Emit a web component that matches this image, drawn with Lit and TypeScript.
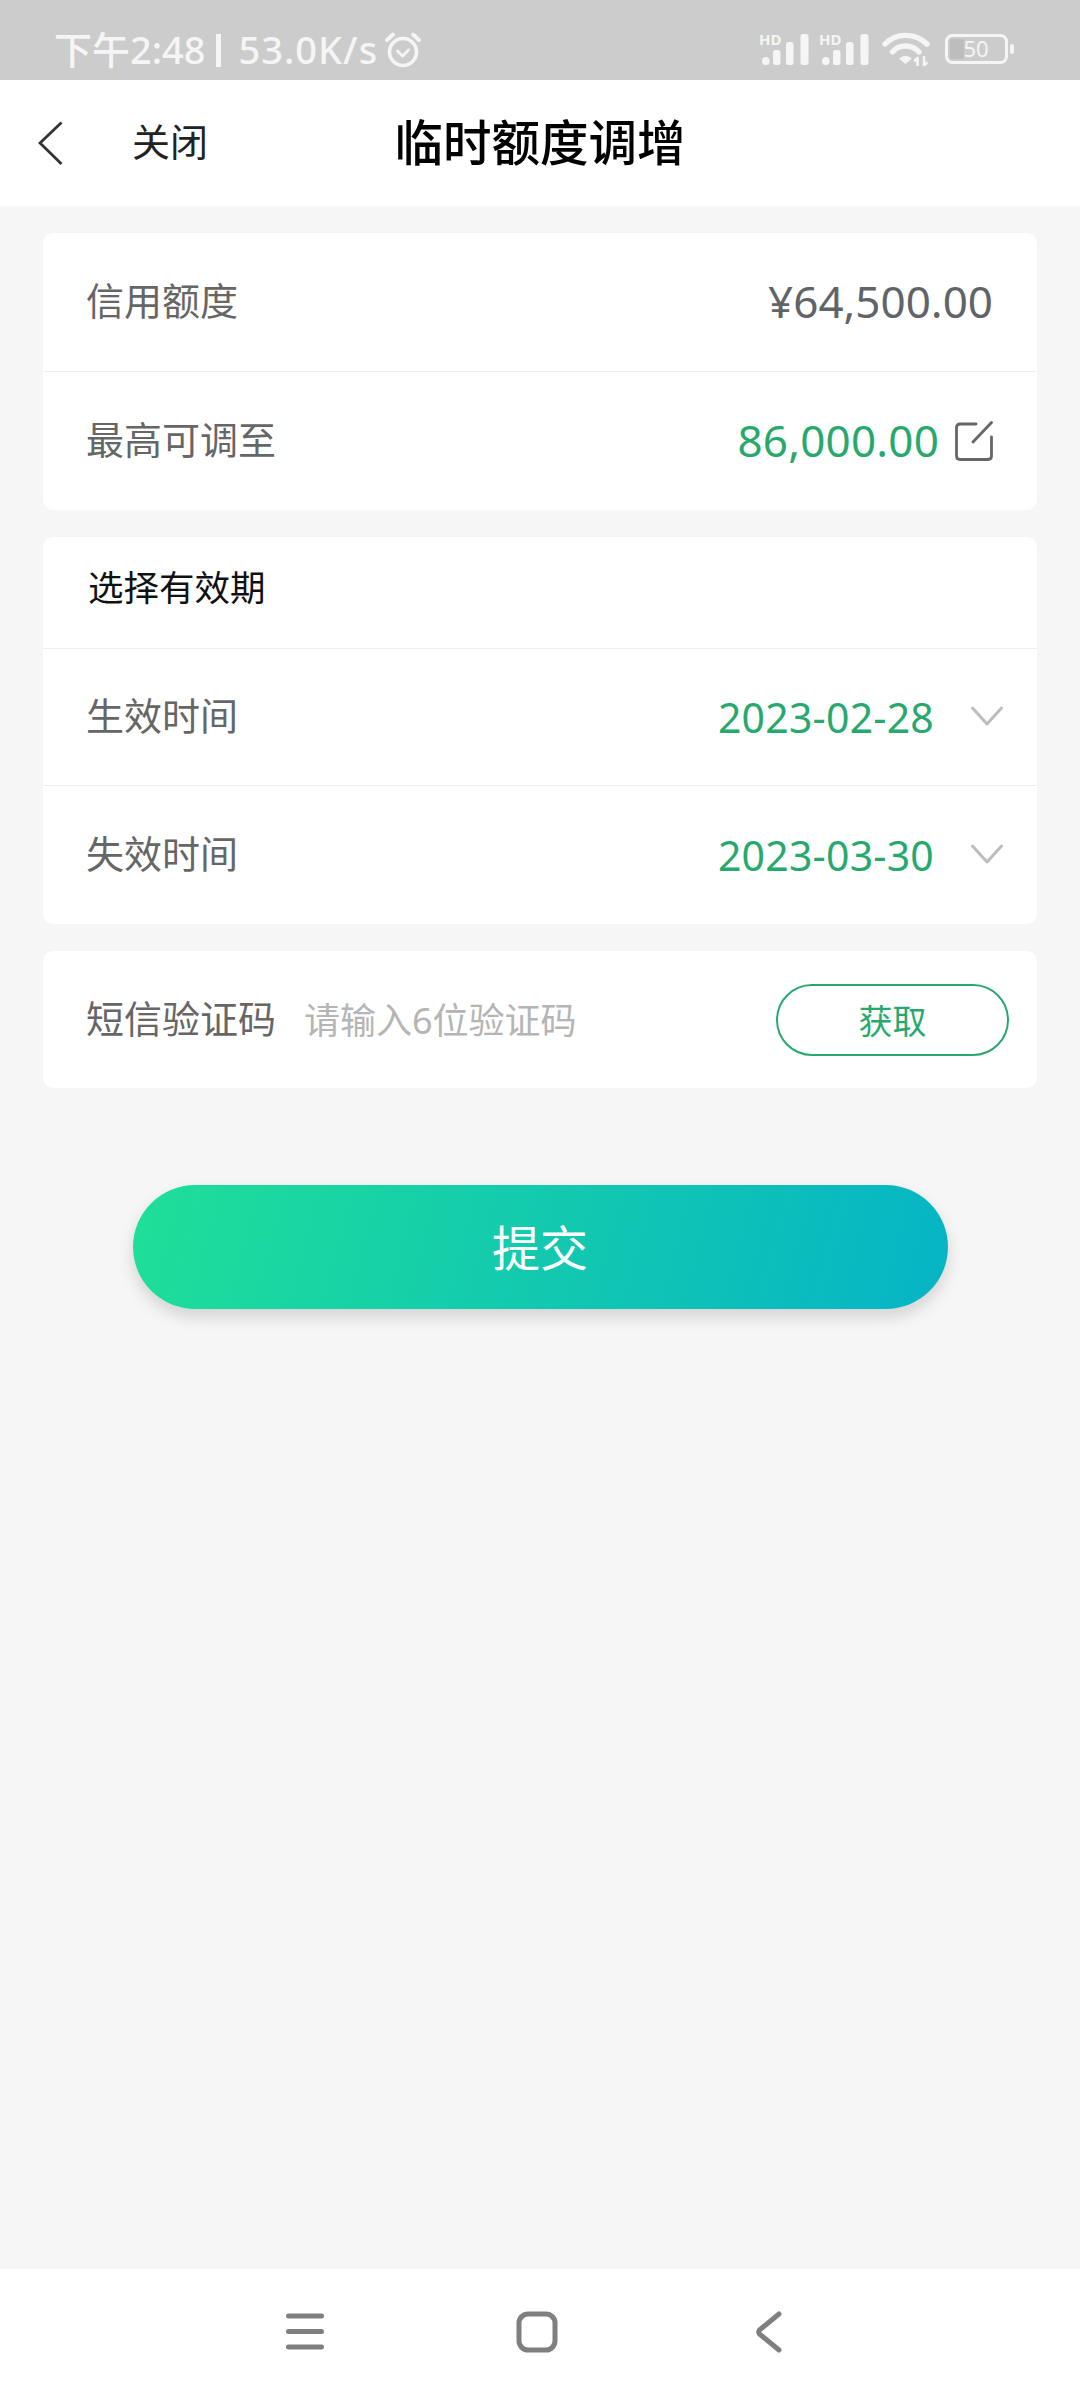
import { css, html, LitElement, svg } from "lit";
import { customElement } from "lit/decorators.js";

const signalIcon = html`
  <svg width="50" height="38" viewBox="0 0 50 38">
    <text x="0" y="17" class="hd">HD</text>
    <rect x="3" y="29" width="7.5" height="8" rx="3.5" fill="#f5f5f5" />
    <rect x="14" y="22" width="7.5" height="15" rx="2.5" fill="#f5f5f5" />
    <rect x="27" y="14" width="7.5" height="23" rx="2.5" fill="#f5f5f5" />
    <rect x="41.5" y="6" width="8" height="31" rx="2.5" fill="#f5f5f5" />
  </svg>
`;

const chevron = svg`<path d="M1.5 2 L16 18 L30.5 2" fill="none" stroke="#bdbdbd" stroke-width="3" stroke-linecap="round" stroke-linejoin="round" />`;

@customElement("app-root")
export class AppRoot extends LitElement {
  render() {
    return html`
      <div class="page">
        <div class="status-bar">
          <div class="status-left">
            <span>下午2:48</span>
            <i class="pipe"></i>
            <span class="speed">53.0K/s</span>
            <svg width="38" height="38" viewBox="0 0 38 38" fill="none" stroke="#f5f5f5" stroke-linecap="round" stroke-linejoin="round">
              <circle cx="19" cy="21" r="13.5" stroke-width="3.6" />
              <path d="M13.5 20 L18.5 25 L24.5 19" stroke-width="3" />
              <path d="M3 9 L9 3.5 M35 9 L29 3.5" stroke-width="4" />
            </svg>
          </div>
          <div class="status-right">
            ${signalIcon} ${signalIcon}
            <svg class="wifi" width="48" height="34" viewBox="0 0 48 34" fill="none" stroke="#f5f5f5" stroke-linecap="round">
              <path d="M3 12 C14 0.5 33 0.5 45 12" stroke-width="5.4" />
              <path d="M10.5 20 C17 12 30 12 37 20" stroke-width="5.4" />
              <path d="M17 26.5 Q23.5 21 30 26.5 L23.5 32 Z" fill="#f5f5f5" stroke="none" />
              <path d="M35.5 26 V33.5 M33 28.5 L35.5 26 M42 25 V33.5 M44.5 31 L42 33.5" stroke-width="2.6" />
            </svg>
            <svg class="battery" width="70" height="30" viewBox="0 0 70 30">
              <rect x="1.5" y="1.5" width="60" height="27" rx="6" fill="none" stroke="#f5f5f5" stroke-width="3" />
              <rect x="5" y="5" width="14" height="20" rx="2" fill="#bdbdbd" />
              <text x="31" y="23" class="batt-num">50</text>
              <rect x="65" y="10" width="4" height="10" rx="2" fill="#f5f5f5" />
            </svg>
          </div>
        </div>

        <header class="top-bar">
          <div class="top-left">
            <svg width="26" height="44" viewBox="0 0 26 44">
              <path d="M23.5 1.5 L2 22 L23.5 43" fill="none" stroke="#333" stroke-width="2.8" />
            </svg>
            <span class="close">关闭</span>
          </div>
          <h1 class="title">临时额度调增</h1>
        </header>

        <main class="content">
          <section class="card">
            <div class="row">
              <span class="label">信用额度</span>
              <span class="value muted">¥64,500.00</span>
            </div>
            <div class="row">
              <span class="label">最高可调至</span>
              <div class="value-group edit">
                <span class="value green">86,000.00</span>
                <svg width="38" height="40" viewBox="0 0 38 40" fill="none" stroke="#666" stroke-width="2.8" stroke-linecap="round">
                  <path d="M21 3 H5 Q1.5 3 1.5 6.5 V35 Q1.5 38.5 5 38.5 H33 Q36.5 38.5 36.5 35 V16" />
                  <path d="M18 21 L36.5 1.5" />
                </svg>
              </div>
            </div>
          </section>

          <section class="card">
            <div class="row head"><span class="label-text">选择有效期</span></div>
            <div class="row short">
              <span class="label">生效时间</span>
              <div class="value-group">
                <span class="date green">2023-02-28</span>
                <svg width="32" height="22" viewBox="0 0 32 22">${chevron}</svg>
              </div>
            </div>
            <div class="row">
              <span class="label">失效时间</span>
              <div class="value-group">
                <span class="date green">2023-03-30</span>
                <svg width="32" height="22" viewBox="0 0 32 22">${chevron}</svg>
              </div>
            </div>
          </section>

          <section class="card">
            <div class="row sms">
              <span class="label">短信验证码</span>
              <span class="placeholder">请输入6位验证码</span>
              <button class="get-code">获取</button>
            </div>
          </section>

          <button class="submit">提交</button>
        </main>

        <nav class="nav-bar">
          <svg width="38" height="38" viewBox="0 0 38 38" stroke="#7f7f7f" stroke-width="5" stroke-linecap="round">
            <path d="M2.5 3 H35.5 M2.5 18.5 H35.5 M2.5 34 H35.5" />
          </svg>
          <svg width="42" height="42" viewBox="0 0 42 42">
            <rect x="3" y="3" width="36" height="36" rx="9" fill="none" stroke="#7f7f7f" stroke-width="5" />
          </svg>
          <svg class="nav-back" width="26" height="42" viewBox="0 0 26 42">
            <path d="M23 3 L3.5 19 Q2 21 3.5 23 L23 39" fill="none" stroke="#7f7f7f" stroke-width="5" stroke-linecap="round" />
          </svg>
        </nav>
      </div>
    `;
  }

  static styles = css`
    :host {
      display: block;
      font-family: "Noto Sans", "Noto Sans CJK SC", sans-serif;
    }

    .page {
      display: flex;
      flex-direction: column;
      height: 2400px;
      background: #f6f6f6;
    }

    .status-bar {
      display: flex;
      align-items: center;
      justify-content: space-between;
      flex: 0 0 80px;
      box-sizing: border-box;
      padding: 17px 65px 0 54px;
      background: #cccccc;
      color: #f5f5f5;
    }

    .status-left {
      display: flex;
      align-items: center;
      font-size: 38px;
      font-weight: 500;
      line-height: 48px;
    }

    .status-left svg {
      margin: 3px 0 0 6px;
    }

    .pipe {
      width: 5px;
      height: 33px;
      margin: 3px 18px 0 10px;
      background: #f5f5f5;
    }

    .speed {
      letter-spacing: 1px;
    }

    .status-right {
      display: flex;
      align-items: flex-end;
      align-self: flex-end;
      gap: 10px;
      margin-bottom: 14px;
    }

    .wifi {
      margin: 0 5px 0 3px;
    }

    .battery {
      margin-bottom: 2px;
    }

    .hd {
      font: 700 15px "Noto Sans", sans-serif;
      fill: #f5f5f5;
    }

    .batt-num {
      font: 400 22px "Noto Sans", sans-serif;
      fill: #f5f5f5;
      text-anchor: middle;
    }

    .top-bar {
      display: grid;
      grid-template-columns: 1fr auto 1fr;
      align-items: center;
      flex: 0 0 126px;
      box-sizing: border-box;
      background: #fff;
    }

    .top-left {
      display: flex;
      align-items: center;
      padding-left: 38px;
    }

    .close {
      margin: 0 0 8px 68px;
      font-size: 38px;
      color: #222;
    }

    .title {
      margin: 0 0 7px;
      font-size: 48.5px;
      font-weight: 500;
      color: #000;
    }

    .content {
      display: flex;
      flex-direction: column;
      flex: 1;
      gap: 27px;
      padding: 27px 43px 0;
    }

    .card {
      display: flex;
      flex-direction: column;
      background: #fff;
      border-radius: 10px;
    }

    .row {
      display: flex;
      align-items: center;
      justify-content: space-between;
      height: 138px;
      box-sizing: border-box;
      padding: 0 44px 0 43px;
    }

    .row + .row {
      height: 139px;
      border-top: 1px solid #eeeeee;
    }

    .row.short {
      height: 137px;
    }

    .row.head {
      height: 111px;
      padding-left: 45px;
    }

    .label-text {
      margin-bottom: 14px;
      font-size: 35.5px;
      color: #111;
    }

    .label {
      margin-bottom: 7px;
      font-size: 38px;
      color: #666;
    }

    .value {
      margin-bottom: 2px;
      font-size: 44px;
    }

    .value.green {
      letter-spacing: 0.2px;
    }

    .date {
      font-size: 41px;
      letter-spacing: 0.2px;
    }

    .muted {
      color: #606468;
    }

    .green {
      color: #27a96e;
    }

    .value-group {
      display: flex;
      align-items: center;
      gap: 37px;
      margin-right: -10px;
    }

    .value-group.edit {
      gap: 16px;
      margin-right: 0;
    }

    .row.sms {
      height: 137px;
      justify-content: flex-start;
      padding-right: 28px;
    }

    .placeholder {
      margin: 0 0 3px 28px;
      font-size: 36px;
      color: #b5b5b5;
    }

    .get-code {
      width: 233px;
      height: 72px;
      margin-left: auto;
      padding: 0;
      border: 2px solid #27a96e;
      border-radius: 36px;
      background: #fff;
      color: #27a96e;
      font: inherit;
      font-size: 34px;
    }

    .submit {
      align-self: center;
      width: 815px;
      height: 124px;
      margin-top: 70px;
      padding: 0 0 4px;
      border: 0;
      border-radius: 62px;
      background: linear-gradient(105deg, #1fdf98 0%, #06b4c6 100%);
      box-shadow: 0 8px 16px rgba(0, 0, 0, 0.14);
      color: #fff;
      font: inherit;
      font-size: 48px;
    }

    .nav-bar {
      display: flex;
      align-items: center;
      justify-content: center;
      gap: 192px;
      flex: 0 0 131px;
      box-sizing: border-box;
      padding: 0 12px 6px 0;
      background: #fff;
    }

    .nav-back {
      margin-left: 6px;
    }
  `;
}

declare global {
  interface HTMLElementTagNameMap {
    "app-root": AppRoot;
  }
}
